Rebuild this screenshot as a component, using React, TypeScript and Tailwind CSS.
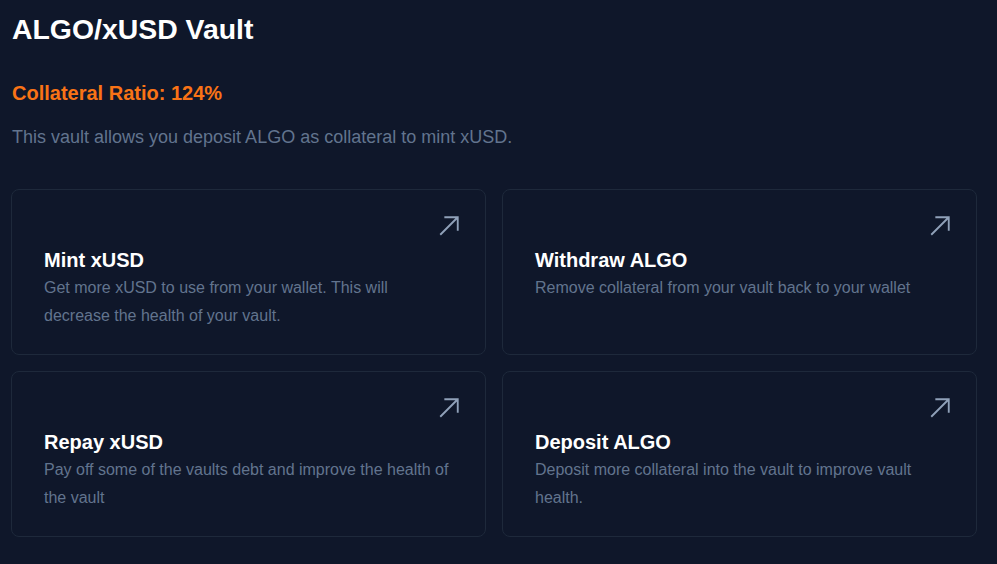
const actions = [
  {
    title: "Mint xUSD",
    text: "Get more xUSD to use from your wallet. This will decrease the health of your vault.",
  },
  {
    title: "Withdraw ALGO",
    text: "Remove collateral from your vault back to your wallet",
  },
  {
    title: "Repay xUSD",
    text: "Pay off some of the vaults debt and improve the health of the vault",
  },
  {
    title: "Deposit ALGO",
    text: "Deposit more collateral into the vault to improve vault health.",
  },
];

function ArrowUpRight() {
  return (
    <svg
      viewBox="0 0 24 24"
      fill="none"
      stroke="currentColor"
      strokeWidth={1.6}
      className="w-7 h-7 text-slate-400"
    >
      <path d="M4.5 19.5 19.5 4.5M8 4.5h11.5V16" />
    </svg>
  );
}

function ActionCard({ title, text }: { title: string; text: string }) {
  return (
    <div className="border border-[#1e293b] rounded-lg bg-[#0f172a] cursor-pointer hover:border-slate-600 transition-colors">
      <div className="flex justify-end pt-[22px] pr-[22px]">
        <ArrowUpRight />
      </div>
      <div className="mt-1.5 px-8 pb-6">
        <h3 className="text-xl leading-7 font-bold text-white">{title}</h3>
        <p className="text-base leading-7 text-slate-500">{text}</p>
      </div>
    </div>
  );
}

export default function App() {
  return (
    <div
      className="min-h-screen bg-[#0f172a] pl-[11px] pt-[11px] pr-5"
      style={{ fontFamily: '"Liberation Sans", Arial, sans-serif' }}
    >
      <h1 className="pl-px text-[28.4px] leading-9 font-bold text-white">ALGO/xUSD Vault</h1>
      <p className="pl-px mt-8 text-xl leading-7 font-bold text-[#f97316]">
        Collateral Ratio: 124%
      </p>
      <p className="pl-px mt-4 text-lg leading-7 text-slate-500">
        This vault allows you deposit ALGO as collateral to mint xUSD.
      </p>

      <div className="mt-[38px] grid grid-cols-2 gap-4 w-[966px]">
        {actions.map((a) => (
          <ActionCard key={a.title} title={a.title} text={a.text} />
        ))}
      </div>
    </div>
  );
}
